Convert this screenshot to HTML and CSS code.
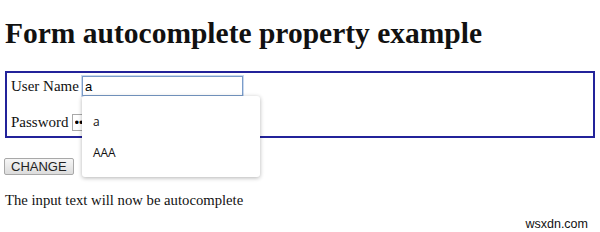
FILE: index.html
```html
<!DOCTYPE html>
<html lang="en">
<head>
  <meta charset="UTF-8">
  <title>Form autocomplete property</title>
  <link rel="stylesheet" href="styles.css">
</head>
<body>
  <h1>Form autocomplete property example</h1>

  <!-- login form with its autocomplete list open -->
  <form class="login" id="login" autocomplete="on">
    <div class="row">
      <label for="user">User Name</label>
      <div class="field">
        <input type="text" id="user" class="text-in focused" value="a">
        <ul class="suggest">
          <li>a</li>
          <li>AAA</li>
        </ul>
      </div>
    </div>
    <div class="row">
      <label for="pass">Password</label>
      <input type="password" id="pass" class="text-in" value="aa">
    </div>
  </form>

  <button class="change-btn" type="button">CHANGE</button>

  <p class="note">The input text will now be autocomplete</p>

  <span class="mark">wsxdn.com</span>
</body>
</html>
```

FILE: styles.css
```css
body {
  margin: 0;
  padding: 0 5px;
  font-family: "Liberation Serif", "Times New Roman", serif;
  font-size: 15px;
  color: #111;
  background: #fff;
  position: relative;
  height: 232px;
  overflow: hidden;
}
h1 {
  font-size: 29.5px;
  line-height: 34px;
  margin: 16px 0 21px 0;
}
.login {
  border: 2px solid #23239a;
  padding: 3px 4px 5px 4px;
  margin: 0;
}
.row {
  display: flex;
  align-items: center;
  gap: 3px;
}
.row + .row {
  margin-top: 18px;
}
.field {
  position: relative;
}
.text-in {
  font-family: "Liberation Sans", Arial, sans-serif;
  font-size: 13px;
  border: 1px solid #a9a9a9;
  padding: 0 2px;
  margin: 0;
  box-sizing: border-box;
  height: 17px;
  width: 161px;
}
.text-in.focused {
  height: 20px;
  border-color: #7a9cc9;
  box-shadow: 0 0 0 1px #c9d8ee;
  outline: none;
}
.suggest {
  position: absolute;
  left: 0;
  top: 20px;
  width: 178px;
  margin: 0;
  padding: 10px 0 9px 0;
  list-style: none;
  background: #fff;
  border-radius: 3px;
  box-shadow: 0 1px 4px rgba(0,0,0,0.3);
  font-family: "Open Sans", "Noto Sans", sans-serif;
  font-size: 12px;
  z-index: 2;
}
.suggest li {
  padding: 0 11px;
  height: 31px;
  line-height: 31px;
}
.change-btn {
  display: block;
  margin: 20px 0 0 -1px;
  font-family: "Liberation Sans", Arial, sans-serif;
  font-size: 13px;
  padding: 0 6px;
  height: 17px;
  border: 1px solid #a8a8a8;
  border-radius: 2px;
  background: linear-gradient(#f6f6f6, #dcdcdc);
  color: #222;
}
.note {
  margin: 17px 0 0 0;
  font-size: 14.7px;
}
.mark {
  position: absolute;
  right: 12px;
  bottom: 1px;
  font-family: "Liberation Sans", Arial, sans-serif;
  font-size: 12.5px;
  color: #111;
}
```
